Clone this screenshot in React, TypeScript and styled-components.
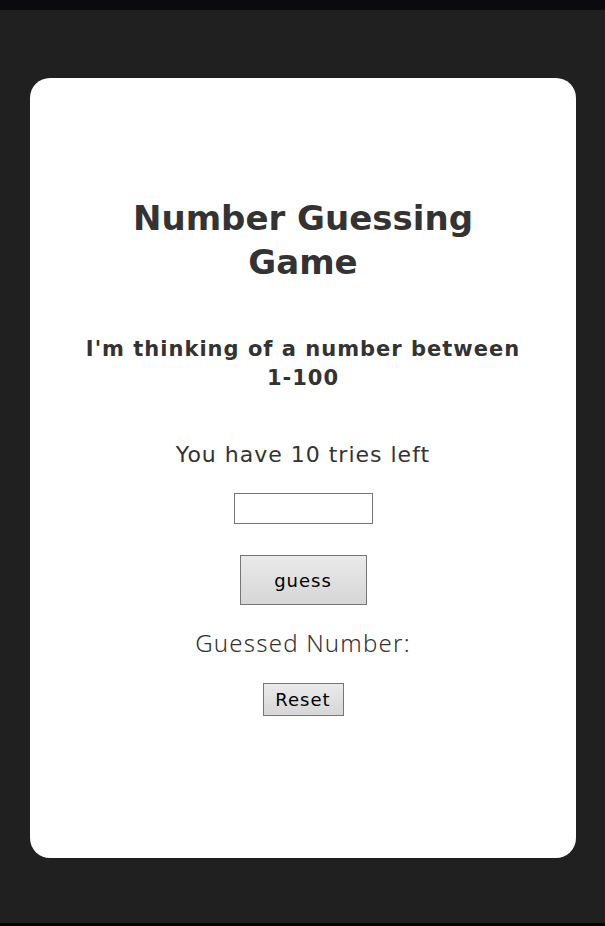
import styled, { createGlobalStyle } from 'styled-components';

const GlobalStyle = createGlobalStyle`
  html, body {
    margin: 0;
    padding: 0;
    background: #202020;
  }
  body {
    font-family: 'DejaVu Sans', 'Noto Sans', sans-serif;
    color: #333;
  }
`;

const Page = styled.div`
  min-height: 926px;
  box-sizing: border-box;
  border-top: 10px solid #0a0a0f;
  border-bottom: 3px solid #050505;
  padding: 68px 29px 0 30px;
`;

const Card = styled.main`
  background: #fff;
  border-radius: 20px;
  height: 780px;
  box-sizing: border-box;
  padding: 118px 40px 0;
  display: flex;
  flex-direction: column;
  align-items: center;
  text-align: center;
`;

const Title = styled.h1`
  margin: 0;
  font-size: 34px;
  line-height: 44px;
  font-weight: 700;
  width: 360px;
`;

const Subtitle = styled.h2`
  margin: 51px 0 0;
  font-size: 21px;
  line-height: 29px;
  font-weight: 700;
  letter-spacing: 1px;
`;

const Tries = styled.p`
  margin: 47px 0 0;
  font-size: 22px;
  line-height: 30px;
  letter-spacing: 1px;
`;

const GuessInput = styled.input`
  margin-top: 23px;
  width: 139px;
  height: 31px;
  box-sizing: border-box;
  border: 1px solid #767676;
  padding: 2px 6px;
  font-size: 16px;
`;

const Button = styled.button<{ $big?: boolean }>`
  box-sizing: border-box;
  font-family: inherit;
  color: #000;
  border: 1px solid #767676;
  background: linear-gradient(#eaeaea, #d6d6d6);
  width: ${({ $big }) => ($big ? '127px' : '81px')};
  height: ${({ $big }) => ($big ? '50px' : '33px')};
  font-size: 18px;
  letter-spacing: 1px;
  padding: 0;
`;

const GuessButton = styled(Button)`
  margin-top: 31px;
`;

const Guessed = styled.p`
  margin: 23px 0 0;
  font-family: 'Noto Sans', sans-serif;
  font-weight: 300;
  font-size: 24px;
  line-height: 30px;
  letter-spacing: 1.2px;
`;

const ResetButton = styled(Button)`
  margin-top: 25px;
`;

export default function App() {
  return (
    <>
      <GlobalStyle />
      <Page>
        <Card>
          <Title>Number Guessing Game</Title>
          <Subtitle>
            I'm thinking of a number between
            <br />
            1-100
          </Subtitle>
          <Tries>You have 10 tries left</Tries>
          <GuessInput type="text" />
          <GuessButton $big>guess</GuessButton>
          <Guessed>Guessed Number:</Guessed>
          <ResetButton>Reset</ResetButton>
        </Card>
      </Page>
    </>
  );
}
